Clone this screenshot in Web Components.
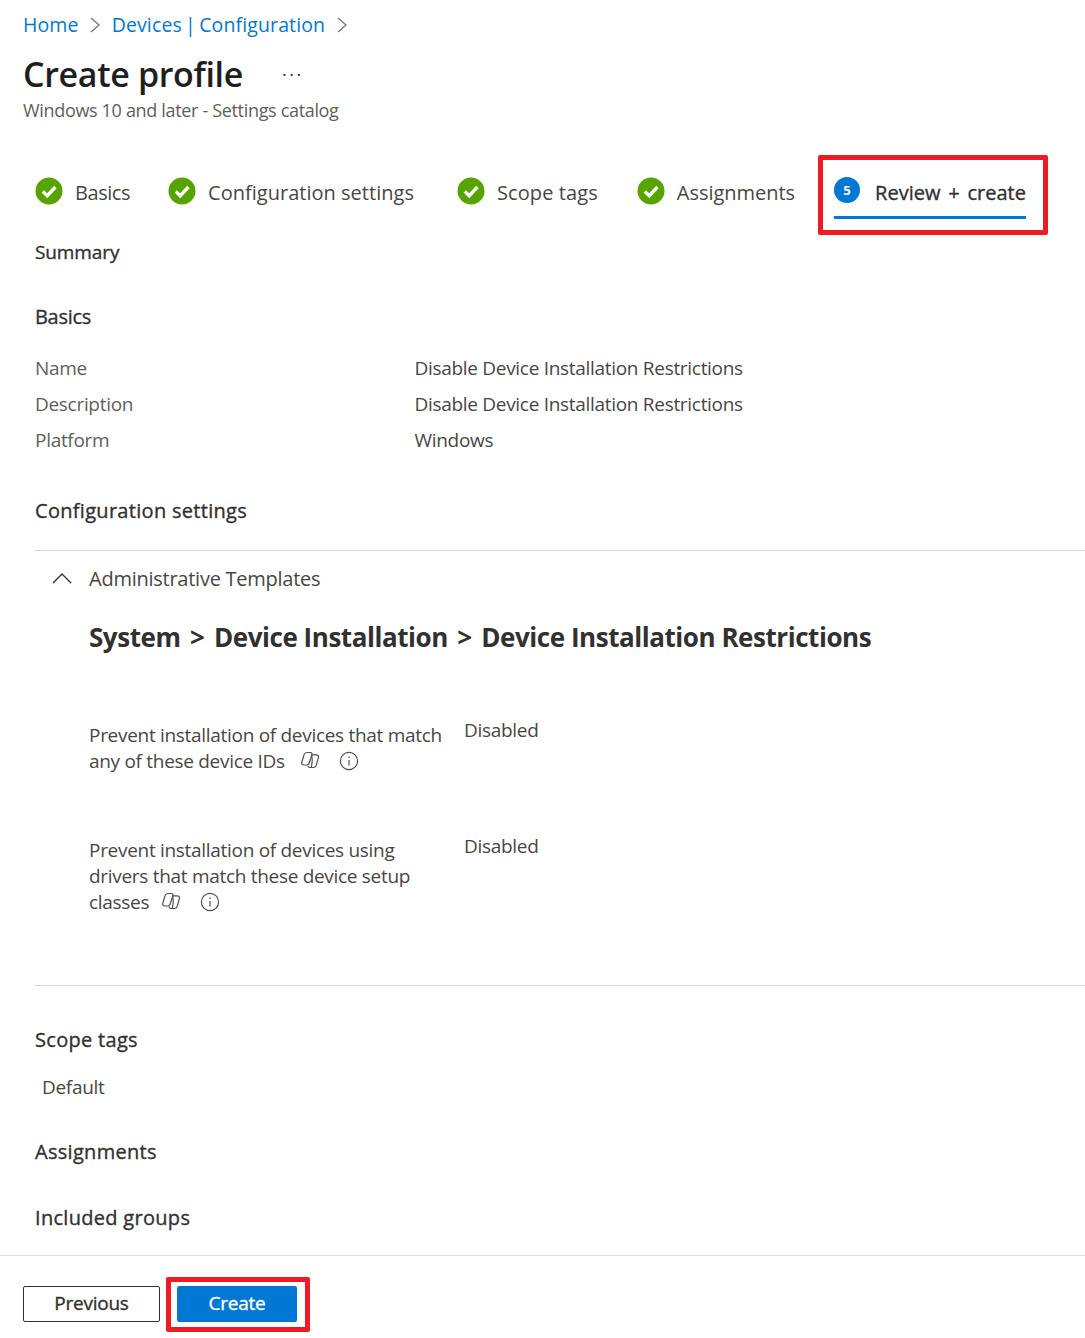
<!DOCTYPE html>
<html lang="en">
<head>
<meta charset="utf-8">
<title>Create profile</title>
<style>
  html, body { margin: 0; background: #fff; }
  body { font-family: "Open Sans", "Noto Sans", sans-serif; font-size: 19px; color: #323130; }
</style>
</head>
<body>
<profile-page></profile-page>

<script>
const FONT = '"Open Sans", "Noto Sans", sans-serif';

const ICONS = {
  chevron: `<svg width="12" height="18" viewBox="0 0 12 18" fill="none" stroke="#757575" stroke-width="1.3"><path d="M2 2l8 7-8 7"/></svg>`,
  check: `<svg width="28" height="28" viewBox="0 0 28 28"><circle cx="14" cy="14" r="13.5" fill="#57a300"/><path d="M7.800 14.400l4.400 4.400L20.400 10" fill="none" stroke="#fff" stroke-width="3.4"/></svg>`,
  up: `<svg width="20" height="12" viewBox="0 0 20 12" fill="none" stroke="#323130" stroke-width="1.4"><path d="M1 11l9-9 9 9"/></svg>`,
  info: `<svg width="20" height="20" viewBox="0 0 20 20" fill="none" stroke="#505050" stroke-width="1.2"><circle cx="10" cy="10" r="8.6"/><path d="M10 9v5.5"/><path d="M10 5.6v1.4"/></svg>`,
  copilot: `<svg width="20" height="18" viewBox="0 0 19 18" fill="none" stroke="#505050" stroke-width="1.2" stroke-linejoin="round"><path d="M6.500 1.500h3.500c1.300 0 1.800 1 1.400 2.200L8.600 12.300c-.4 1.200-1.100 1.700-2.200 1.700H3.400C1.600 14 .8 12.800 1.300 11.200L3.600 3.600C4 2.200 5 1.500 6.500 1.500z"/><path d="M10.500 3.800h5c1.900 0 2.900 1.200 2.400 2.900l-2.200 7.600c-.4 1.400-1.400 2.200-2.900 2.200H9.200c-1.100 0-1.700-.8-1.500-1.800"/><path d="M11 4c1 3.500 1 7.500-.4 12.400"/></svg>`
};

class PageCrumbs extends HTMLElement {
  constructor() {
    super();
    this.attachShadow({ mode: 'open' });
    this.shadowRoot.innerHTML = `
      <style>
        :host { display: flex; align-items: center; height: 25px; gap: 10.5px; font-size: 19.5px; }
        a { color: #0078d4; text-decoration: none; letter-spacing: 0.13px; word-spacing: -2px; }
        span { display: flex; }
      </style>
      <a>Home</a><span>${ICONS.chevron}</span>
      <a>Devices | Configuration</a><span>${ICONS.chevron}</span>`;
  }
}

class PageHead extends HTMLElement {
  constructor() {
    super();
    this.attachShadow({ mode: 'open' });
    this.shadowRoot.innerHTML = `
      <style>
        :host { display: block; }
        .row { display: flex; align-items: center; height: 48px; gap: 39px; }
        h1 { margin: 0; font-size: 34px; font-weight: 600; color: #201f1e; letter-spacing: -0.35px; }
        .more { font-size: 18px; line-height: 1; margin-top: -10px; letter-spacing: 2.5px; color: #323130; }
        p { margin: 0; font-size: 18px; line-height: 24px; color: #605e5c; letter-spacing: -0.33px; }
      </style>
      <div class="row"><h1><slot></slot></h1><span class="more">...</span></div>
      <p><slot name="sub"></slot></p>`;
  }
}

class WizardTab extends HTMLElement {
  constructor() {
    super();
    this.attachShadow({ mode: 'open' });
    const active = this.hasAttribute('active');
    const icon = active ? `<i class="num">${this.getAttribute('step')}</i>` : ICONS.check;
    this.shadowRoot.innerHTML = `
      <style>
        :host { display: block; position: relative; }
        .tab { display: flex; align-items: center; height: 54px; gap: 12px; font-size: 20px; color: #484644; letter-spacing: var(--ls, 0); }
        svg { margin-top: -3px; }
        .num { width: 26px; height: 26px; margin-top: -4px; border-radius: 50%; background: #0078d4; color: #fff; font: 700 13px/26px ${FONT}; text-align: center; letter-spacing: 0; }
        :host([active]) .tab { color: #323130; box-shadow: inset 0 -3px 0 #0078d4; gap: 15px; word-spacing: 2.6px; -webkit-text-stroke: 0.35px #323130; }
        :host([active]) .num { -webkit-text-stroke: 0; }
        :host([active]) .mark { position: absolute; left: -16px; right: -22px; top: -10px; bottom: -16px; border: 5px solid #ed1c24; border-radius: 2px; }
      </style>
      <div class="tab">${icon}<span><slot></slot></span></div>
      ${active ? '<div class="mark"></div>' : ''}`;
  }
}

class WizardTabs extends HTMLElement {
  constructor() {
    super();
    this.attachShadow({ mode: 'open' });
    this.shadowRoot.innerHTML = `
      <style>
        :host { display: flex; align-items: flex-start; gap: 39px; }
      </style>
      <slot></slot>`;
  }
}

class SumHeading extends HTMLElement {
  constructor() {
    super();
    this.attachShadow({ mode: 'open' });
    this.shadowRoot.innerHTML = `
      <style>
        :host { display: block; font-size: 20px; line-height: 28px; color: #323130; letter-spacing: 0.3px; -webkit-text-stroke: 0.35px #323130; }
      </style>
      <slot></slot>`;
  }
}

class KeyValue extends HTMLElement {
  constructor() {
    super();
    this.attachShadow({ mode: 'open' });
    this.shadowRoot.innerHTML = `
      <style>
        :host { display: grid; grid-template-columns: 379.5px 1fr; height: 36px; align-items: center; font-size: 19px; letter-spacing: -0.3px; }
        .k { color: #605e5c; }
        .v { color: #484644; }
      </style>
      <div class="k">${this.getAttribute('label')}</div>
      <div class="v"><slot></slot></div>`;
  }
}

class SettingRow extends HTMLElement {
  constructor() {
    super();
    this.attachShadow({ mode: 'open' });
    this.shadowRoot.innerHTML = `
      <style>
        :host { display: grid; grid-template-columns: 375px 1fr; font-size: 19px; line-height: 26px; letter-spacing: -0.3px; color: #484644; }
        .label { padding: var(--pad, 5px) 15px 0 0; }
        .ic { display: inline-flex; gap: 19px; margin-left: var(--ic-ml, 15px); vertical-align: -1px; }
      </style>
      <div class="label"><slot></slot><span class="ic">${ICONS.copilot}${ICONS.info}</span></div>
      <div class="val">${this.getAttribute('value')}</div>`;
  }
}

class TemplateGroup extends HTMLElement {
  constructor() {
    super();
    this.attachShadow({ mode: 'open' });
    const path = this.getAttribute('path').split('>').map(s => s.trim()).join('<span class="sep">&gt;</span>');
    this.shadowRoot.innerHTML = `
      <style>
        :host { display: block; border-top: 1px solid #d6d6d6; border-bottom: 1px solid #d6d6d6; height: 434px; }
        .head { display: flex; align-items: center; height: 54px; gap: 17px; padding-left: 17px; font-size: 20px; color: #484644; letter-spacing: -0.25px; }
        .body { padding-left: 54px; }
        h2 { margin: 2px 0 0; font-size: 26px; line-height: 60px; height: 60px; font-weight: 700; color: #323130; letter-spacing: -0.45px; }
        .sep { margin: 0 9.5px; }
      </style>
      <div class="head">${ICONS.up}<span>${this.getAttribute('label')}</span></div>
      <div class="body">
        <h2>${path}</h2>
        <slot></slot>
      </div>`;
  }
}

class ActionBar extends HTMLElement {
  constructor() {
    super();
    this.attachShadow({ mode: 'open' });
    this.shadowRoot.innerHTML = `
      <style>
        :host { display: flex; align-items: flex-start; gap: 17px; height: 83px; box-sizing: border-box; padding: 30px 23px 0; border-top: 1px solid #e1dfdd; }
        button { box-sizing: border-box; height: 36px; border-radius: 2px; font: 400 19px ${FONT}; letter-spacing: -0.25px; padding: 0 0 2px; -webkit-text-stroke: 0.35px currentColor; }
        .prev { width: 137px; background: #fff; border: 1px solid #323130; color: #323130; }
        .wrap { position: relative; display: flex; }
        .go { width: 120px; background: #0078d4; border: 0; color: #fff; }
        .mark { position: absolute; left: -11px; right: -13px; top: -9px; bottom: -10px; border: 5px solid #ed1c24; border-radius: 2px; }
      </style>
      <button class="prev">Previous</button>
      <div class="wrap"><button class="go">Create</button><div class="mark"></div></div>`;
  }
}

class ProfilePage extends HTMLElement {
  constructor() {
    super();
    this.attachShadow({ mode: 'open' });
    this.shadowRoot.innerHTML = `
      <style>
        :host { display: flex; flex-direction: column; width: 1085px; height: 1338px; overflow: hidden; font-family: ${FONT}; }
        header { padding: 12px 23px 0; }
        page-head { margin-top: 13px; }
        main { flex: 1; min-height: 0; padding-left: 35px; }
        wizard-tabs { margin-top: 43px; }
        .summary { margin-top: 19px; font-size: 19px; letter-spacing: -0.1px; }
        .basics { margin-top: 37px; margin-bottom: 19px; letter-spacing: -0.3px; }
        .config { margin-top: 39px; margin-bottom: 25px; }
        setting-row { margin-top: 50px; }
        setting-row + setting-row { margin-top: 59px; --pad: 4px; --ic-ml: 12px; }
        .scope { margin-top: 40px; }
        .def { padding-left: 7px; line-height: 28px; margin-top: 19px; font-size: 19px; letter-spacing: -0.3px; color: #484644; }
        .assign { margin-top: 37px; }
        .groups { margin-top: 38px; }
      </style>
      <header>
        <page-crumbs></page-crumbs>
        <page-head>Create profile<span slot="sub">Windows 10 and later - Settings catalog</span></page-head>
      </header>
      <main>
        <wizard-tabs>
          <wizard-tab style="--ls:-0.45px;margin-right:-1px">Basics</wizard-tab>
          <wizard-tab style="--ls:0.02px;margin-right:4px">Configuration settings</wizard-tab>
          <wizard-tab style="--ls:0.1px">Scope tags</wizard-tab>
          <wizard-tab style="--ls:-0.03px">Assignments</wizard-tab>
          <wizard-tab active step="5">Review + create</wizard-tab>
        </wizard-tabs>
        <sum-heading class="summary">Summary</sum-heading>
        <sum-heading class="basics">Basics</sum-heading>
        <key-value label="Name">Disable Device Installation Restrictions</key-value>
        <key-value label="Description">Disable Device Installation Restrictions</key-value>
        <key-value label="Platform">Windows</key-value>
        <sum-heading class="config">Configuration settings</sum-heading>
        <template-group label="Administrative Templates" path="System > Device Installation > Device Installation Restrictions">
          <setting-row value="Disabled">Prevent installation of devices that match any of these device IDs</setting-row>
          <setting-row value="Disabled">Prevent installation of devices using drivers that match these device setup classes</setting-row>
        </template-group>
        <sum-heading class="scope">Scope tags</sum-heading>
        <div class="def">Default</div>
        <sum-heading class="assign">Assignments</sum-heading>
        <sum-heading class="groups">Included groups</sum-heading>
      </main>
      <action-bar></action-bar>`;
  }
}

customElements.define('page-crumbs', PageCrumbs);
customElements.define('page-head', PageHead);
customElements.define('wizard-tab', WizardTab);
customElements.define('wizard-tabs', WizardTabs);
customElements.define('sum-heading', SumHeading);
customElements.define('key-value', KeyValue);
customElements.define('setting-row', SettingRow);
customElements.define('template-group', TemplateGroup);
customElements.define('action-bar', ActionBar);
customElements.define('profile-page', ProfilePage);
</script>
</body>
</html>
